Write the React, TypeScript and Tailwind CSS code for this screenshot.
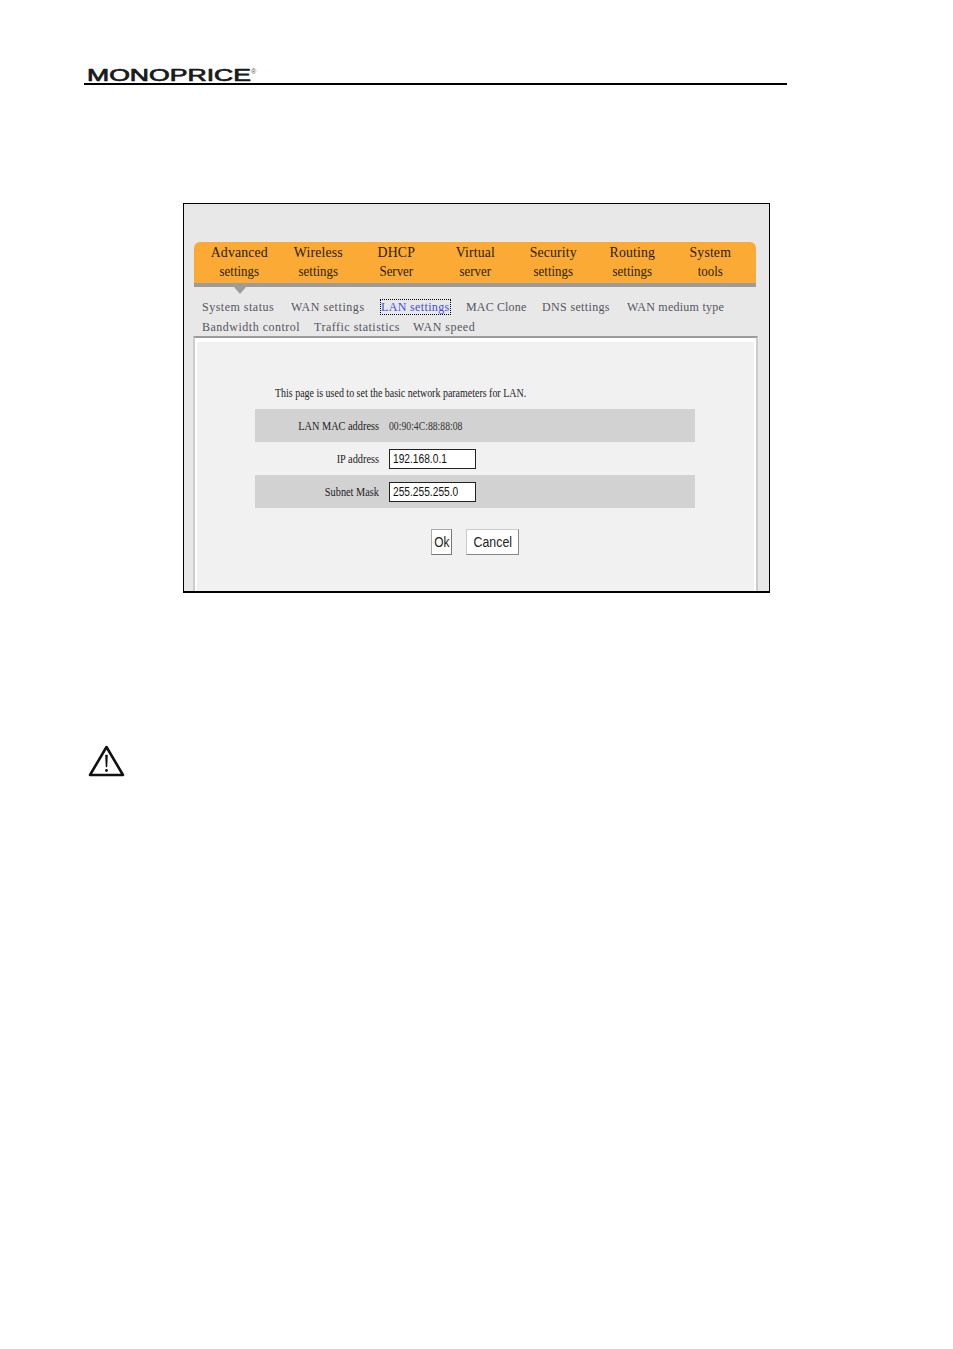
const menus = [
  ['Advanced', 'settings'],
  ['Wireless', 'settings'],
  ['DHCP', 'Server'],
  ['Virtual', 'server'],
  ['Security', 'settings'],
  ['Routing', 'settings'],
  ['System', 'tools'],
];

function SubLink({ label, active, className = '' }: { label: string; active?: boolean; className?: string }) {
  if (active) {
    return (
      <span className={`text-[#3f4bf0] outline-dotted outline-1 outline-black leading-[14px] block mt-[3px] h-[14px] ${className}`}>
        {label}
      </span>
    );
  }
  return <span className={`text-[#55555f] ${className}`}>{label}</span>;
}

function Logo() {
  return (
    <svg width="172" height="18" viewBox="0 0 172 18" className="block">
      <text
        x="0"
        y="15"
        textLength="164"
        lengthAdjust="spacingAndGlyphs"
        fontFamily="'Liberation Sans', sans-serif"
        fontSize="17"
        fill="#1a1a1a"
        stroke="#1a1a1a"
        strokeWidth="0.7"
        strokeLinejoin="round"
      >
        MONOPRICE
      </text>
      <text x="164" y="8" fontFamily="'Liberation Sans', sans-serif" fontSize="7" fill="#555">
        ®
      </text>
    </svg>
  );
}

function WarningIcon() {
  return (
    <svg width="37" height="33" viewBox="0 0 37 33" className="block">
      <path d="M18.5 2 L35 30 L2 30 Z" fill="none" stroke="#111" strokeWidth="2.6" strokeLinejoin="round" />
      <path d="M17.4 10 L19.6 10 L19 22 L18 22 Z" fill="#111" stroke="#111" strokeWidth="0.4" />
      <circle cx="18.5" cy="25.5" r="1.4" fill="#111" />
    </svg>
  );
}

function FormRow({ label, shaded, children }: { label: string; shaded?: boolean; children: React.ReactNode }) {
  return (
    <div className={`flex items-center h-[33px] ${shaded ? 'bg-[#d2d2d2]' : ''}`}>
      <div className="w-[124px] text-right text-[12px] text-[#222] origin-right scale-x-[0.86] pt-px">{label}</div>
      <div className="ml-[10px] pt-px">{children}</div>
    </div>
  );
}

function TextBox({ value }: { value: string }) {
  return (
    <div className="w-[87px] h-[20px] bg-white border border-[#222] pl-[3px] font-['Liberation_Sans',sans-serif] text-[12px] leading-[18px] text-[#111]">
      <span className="block origin-left scale-x-[0.85]">{value}</span>
    </div>
  );
}

export default function App() {
  return (
    <div className="w-[953px] h-[1349px] bg-white font-['Liberation_Serif',serif] overflow-hidden">
      <div className="pt-[66px] pl-[84px]">
        <div className="w-[703px] border-b-2 border-black pl-[3px] h-[19px]">
          <Logo />
        </div>
      </div>

      <div className="ml-[183px] mt-[118px] w-[587px] h-[390px] border border-black border-b-2 bg-[#e8e8e8] pt-[38px] overflow-hidden">
        <div className="ml-[10px] w-[562px] relative">
          <div className="h-[45px] bg-[#fbab35] border-b-4 border-[#9c9c9c] rounded-t-[6px] px-[6px] grid grid-cols-7">
            {menus.map((m) => (
              <div key={m[0]} className="text-center text-[#2a1c08] text-[15px] leading-[19px] pt-[1px]">
                <div className="tracking-[0.15px] scale-x-[0.92]">{m[0]}</div>
                <div className="text-[14px] scale-x-[0.92]">{m[1]}</div>
              </div>
            ))}
          </div>
          <div className="absolute left-[40px] top-[45px] w-0 h-0 border-x-[6px] border-x-transparent border-t-[7px] border-t-[#9c9c9c]" />
        </div>

        <div className="ml-[18px] mt-[10px] text-[12px] tracking-[0.5px] leading-[20px] h-[39px]">
          <div className="flex">
            <SubLink label="System status" className="w-[89px]" />
            <SubLink label="WAN settings" className="w-[90px] tracking-[0.55px]" />
            <SubLink label="LAN settings" active className="w-[69px] tracking-[0.35px] mr-[16px]" />
            <SubLink label="MAC Clone" className="w-[76px] tracking-[0.15px]" />
            <SubLink label="DNS settings" className="w-[85px] tracking-[0.35px]" />
            <SubLink label="WAN medium type" className="tracking-[0.25px]" />
          </div>
          <div className="flex">
            <SubLink label="Bandwidth control" className="w-[112px]" />
            <SubLink label="Traffic statistics" className="w-[99px]" />
            <SubLink label="WAN speed" />
          </div>
        </div>

        <div className="ml-[9px] w-[565px] h-[263px] border-t-2 border-x-2 border-[#9c9c9c] border-r-[#cccccc] border-l-[#cccccc]">
          <div className="h-full border-t-4 border-x-2 border-white bg-[#f1f1f1] pl-[58px] pt-[44px]">
            <div className="pl-[20px] text-[12px] leading-[14px] text-[#222] h-[23px] whitespace-nowrap">
              <span className="inline-block origin-left scale-x-[0.83]">
                This page is used to set the basic network parameters for LAN.
              </span>
            </div>
            <div className="w-[440px]">
              <FormRow label="LAN MAC address" shaded>
                <span className="block origin-left scale-x-[0.81] text-[12px] text-[#333]">00:90:4C:88:88:08</span>
              </FormRow>
              <FormRow label="IP address">
                <TextBox value="192.168.0.1" />
              </FormRow>
              <FormRow label="Subnet Mask" shaded>
                <TextBox value="255.255.255.0" />
              </FormRow>
              <div className="flex pt-[21px] pl-[176px] gap-[14px] font-['Liberation_Sans',sans-serif] text-[14px] text-[#222]">
                <div className="w-[21px] h-[26px] bg-white border border-[#aaa] border-r-[#777] border-b-[#777] flex items-center justify-center">
                  <span className="scale-x-[0.85]">Ok</span>
                </div>
                <div className="w-[53px] h-[26px] bg-white border border-[#ccc] border-r-[#888] border-b-[#888] flex items-center justify-center">
                  <span className="scale-x-[0.88]">Cancel</span>
                </div>
              </div>
            </div>
          </div>
        </div>
      </div>

      <div className="ml-[88px] mt-[152px]">
        <WarningIcon />
      </div>
    </div>
  );
}
